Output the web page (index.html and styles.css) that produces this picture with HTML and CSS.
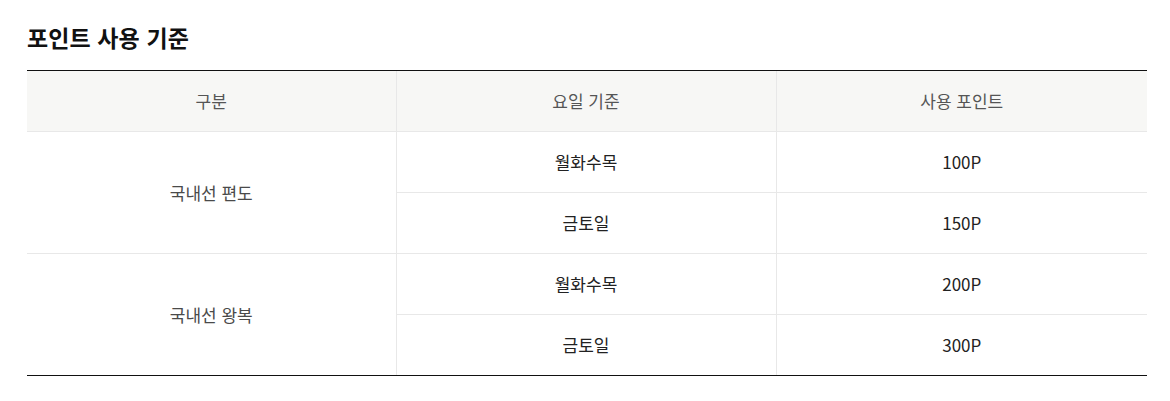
FILE: index.html
```html
<!DOCTYPE html>
<html lang="ko">
<head>
<meta charset="utf-8">
<link rel="stylesheet" href="styles.css">
</head>
<body>
<div class="wrap">
  <h2 class="title">포인트 사용 기준</h2>
  <table class="point-table">
    <colgroup>
      <col class="c1">
      <col class="c2">
      <col class="c3">
    </colgroup>
    <thead>
      <tr>
        <th>구분</th>
        <th>요일 기준</th>
        <th>사용 포인트</th>
      </tr>
    </thead>
    <tbody>
      <tr>
        <td class="cat" rowspan="2">국내선 편도</td>
        <td>월화수목</td>
        <td>100P</td>
      </tr>
      <tr>
        <td>금토일</td>
        <td>150P</td>
      </tr>
      <tr>
        <td class="cat end" rowspan="2">국내선 왕복</td>
        <td>월화수목</td>
        <td>200P</td>
      </tr>
      <tr>
        <td class="end">금토일</td>
        <td class="end">300P</td>
      </tr>
    </tbody>
  </table>
</div>
</body>
</html>
```

FILE: styles.css
```css
html, body {
  margin: 0;
  padding: 0;
  background: #fff;
}
body {
  font-family: "Noto Sans CJK KR", "Noto Sans", sans-serif;
}
.wrap {
  padding: 21px 23px 0 27px;
}
.title {
  margin: 0 0 16px;
  font-size: 23px;
  line-height: 33px;
  font-weight: 700;
  color: #111;
  letter-spacing: 0.1px;
}
.point-table {
  width: 1120px;
  border-collapse: collapse;
  table-layout: fixed;
}
.c1 { width: 369px; }
.c2 { width: 380px; }
.c3 { width: 371px; }
.point-table th,
.point-table td {
  height: 60px;
  padding: 0;
  text-align: center;
  vertical-align: middle;
  font-size: 17px;
  line-height: 20px;
  border-bottom: 1px solid #e8e8e8;
  border-left: 1px solid #e8e8e8;
}
.point-table th {
  border-top: 1px solid #111;
  background: #f7f7f5;
  font-weight: 400;
  color: #555;
}
.point-table th:first-child,
.point-table td.cat {
  border-left: none;
}
.point-table td {
  color: #222;
}
.point-table td.cat {
  color: #4a4a4a;
}
.point-table td.end {
  border-bottom: 1px solid #111;
}
```
